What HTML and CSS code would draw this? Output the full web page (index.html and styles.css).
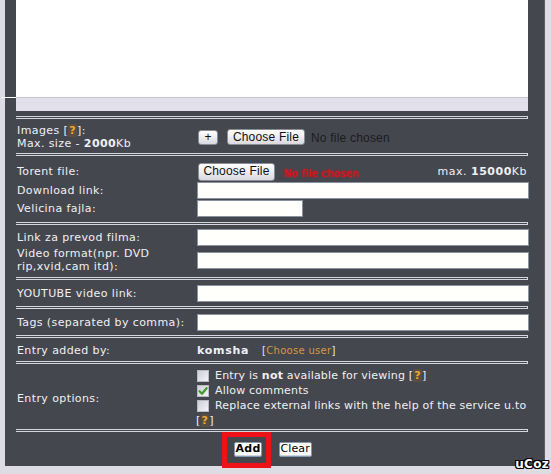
FILE: index.html
```html
<!DOCTYPE html>
<html>
<head>
<meta charset="utf-8">
<link rel="stylesheet" href="styles.css">
</head>
<body>
<div class="page">
  <div class="panel">
    <div class="editor">
      <div class="editor-area"></div>
      <div class="editor-bar"></div>
    </div>
    <div class="sep"></div>

    <div class="section s-images">
      <div class="row">
        <div class="label">Images [<span class="q">?</span>]:<br>Max. size - <b>2000</b>Kb</div>
        <div class="field">
          <button class="btn plus">+</button>
          <button class="btn file">Choose File</button>
          <span class="nofile">No file chosen</span>
        </div>
      </div>
    </div>
    <div class="sep"></div>

    <div class="section s-torrent">
      <div class="row r19">
        <div class="label">Torent file:</div>
        <div class="field">
          <button class="btn file file2">Choose File</button>
          <span class="nofile-red">No file chosen</span>
          <span class="max">max. <b>15000</b>Kb</span>
        </div>
      </div>
      <div class="row r18">
        <div class="label">Download link:</div>
        <div class="field"><span class="inp"></span></div>
      </div>
      <div class="row r18">
        <div class="label">Velicina fajla:</div>
        <div class="field"><span class="inp short"></span></div>
      </div>
    </div>
    <div class="sep"></div>

    <div class="section s-links">
      <div class="row r19">
        <div class="label">Link za prevod filma:</div>
        <div class="field"><span class="inp"></span></div>
      </div>
      <div class="row r26">
        <div class="label">Video format(npr. DVD<br>rip,xvid,cam itd):</div>
        <div class="field"><span class="inp"></span></div>
      </div>
    </div>
    <div class="sep"></div>

    <div class="section s-single">
      <div class="row r19">
        <div class="label">YOUTUBE video link:</div>
        <div class="field"><span class="inp"></span></div>
      </div>
    </div>
    <div class="sep"></div>

    <div class="section s-single">
      <div class="row r19">
        <div class="label">Tags (separated by comma):</div>
        <div class="field"><span class="inp"></span></div>
      </div>
    </div>
    <div class="sep"></div>

    <div class="section s-user">
      <div class="row r16">
        <div class="label">Entry added by:</div>
        <div class="field">
          <b class="user">komsha</b>
          <span class="choose">[<span class="choose-link">Choose user</span>]</span>
        </div>
      </div>
    </div>
    <div class="sep"></div>

    <div class="section s-options">
      <div class="row">
        <div class="label">Entry options:</div>
        <div class="field opts">
          <div class="opt"><span class="cb"></span><span class="opt-text">Entry is <b>not</b> available for viewing [<span class="q">?</span>]</span></div>
          <div class="opt"><span class="cb"><svg viewBox="0 0 12 12" width="12" height="12"><path d="M2.5 6.2 L5 8.8 L9.6 3.2" fill="none" stroke="#3f9a2a" stroke-width="2.2" stroke-linecap="round" stroke-linejoin="round"/></svg></span><span class="opt-text">Allow comments</span></div>
          <div class="opt"><span class="cb"></span><span class="opt-text">Replace external links with the help of the service u.to</span></div>
          <div class="opt opt-q"><span>[<span class="q">?</span>]</span></div>
        </div>
      </div>
    </div>
    <div class="sep"></div>

    <div class="section s-buttons">
      <span class="hl"><button class="sbtn add">Add</button></span>
      <button class="sbtn clear">Clear</button>
    </div>
  </div>
  <div class="ucoz">uCoz</div>
</div>
</body>
</html>
```
FILE: styles.css
```css
html, body {
  margin: 0;
  padding: 0;
}
body {
  background: #dddce2;
  font-family: "DejaVu Sans", Verdana, sans-serif;
}
.page {
  position: relative;
  width: 551px;
  height: 474px;
  overflow: hidden;
  background: #dddce2;
}
.panel {
  position: relative;
  margin-left: 5px;
  width: 540px;
  height: 466px;
  box-sizing: border-box;
  padding: 0 16px 0 11px;
  background: #45474f;
  border-right: 1px solid #5b5d66;
  color: #f0f0f2;
  font-size: 11px;
  letter-spacing: 0.3px;
}
.editor {
  position: relative;
  margin-bottom: 5px;
}
.editor::before {
  content: "";
  position: absolute;
  left: -14px;
  top: 97px;
  width: 14px;
  height: 1px;
  background: #ffffff;
}
.editor-area {
  height: 97px;
  background: #ffffff;
}
.editor-bar {
  height: 13px;
  border-top: 1px solid #c6c6ce;
  background: #e2e1eb;
}
.sep {
  height: 1px;
  border-top: 1px solid #d6d6de;
  border-bottom: 1px solid #d6d6de;
  border-right: 1px solid #d6d6de;
}
.section {
  box-sizing: border-box;
}
.s-images { padding: 5px 0 3px; }
.s-torrent { padding: 6px 0 5px; }
.s-links { padding: 3px 0 4px; }
.s-single { padding: 4px 0 3px; }
.s-user { padding: 4px 0 3px; }
.s-options { padding: 4px 0 1px; }
.row {
  display: grid;
  grid-template-columns: 181px 332px;
  align-items: center;
  line-height: 13px;
}
.r16 { height: 16px; }
.r18 { height: 18px; }
.r19 { height: 19px; }
.r26 { height: 26px; }
.label {
  padding-left: 1px;
  white-space: nowrap;
  letter-spacing: 0.4px;
}
.field {
  display: flex;
  align-items: center;
  min-width: 0;
}
.q {
  color: #f0a72e;
  font-weight: bold;
  background: #5a4e40;
  padding: 0 1px;
}
.btn {
  box-sizing: border-box;
  font-family: "Liberation Sans", Arial, sans-serif;
  font-size: 12px;
  letter-spacing: 0.2px;
  color: #111;
  background: linear-gradient(#ffffff, #e9e9ec 60%, #d9d9de);
  border: 1px solid #8b8d96;
  border-radius: 3px;
  padding: 0;
  margin: 0;
  line-height: 13px;
}
.plus {
  width: 20px;
  height: 15px;
  margin-left: 1px;
}
.file {
  width: 78px;
  height: 16px;
  margin-left: 9px;
}
.file2 {
  width: 77px;
  height: 18px;
  margin-left: 1px;
}
.nofile {
  margin-left: 6px;
  margin-top: 3px;
  font-family: "Liberation Sans", Arial, sans-serif;
  font-size: 12px;
  letter-spacing: 0.2px;
  color: #1c1c20;
}
.nofile-red {
  margin-left: 9px;
  margin-top: 4px;
  font-size: 10px;
  color: #d4161c;
  letter-spacing: 0.3px;
  text-shadow: 0 0 2px #d4161c, 0 0 1px #d4161c;
}
.max {
  margin-left: auto;
  margin-right: 2px;
  letter-spacing: 0.5px;
}
.inp {
  display: block;
  box-sizing: border-box;
  width: 332px;
  height: 17px;
  background: #fffffb;
  border: 1px solid #8a939d;
}
.inp.short {
  width: 106px;
}
.user {
  letter-spacing: 0.7px;
}
.choose {
  margin-left: 13px;
  font-size: 10px;
  letter-spacing: 0.3px;
  color: #e6e6e8;
}
.choose-link {
  color: #d9963f;
}
.opts {
  flex-direction: column;
  align-items: stretch;
}
.opt {
  display: flex;
  align-items: center;
  height: 15px;
  white-space: nowrap;
}
.opt-text {
  letter-spacing: 0.2px;
}
.cb {
  flex: none;
  box-sizing: border-box;
  width: 12px;
  height: 12px;
  margin-right: 6px;
  background: linear-gradient(135deg, #cfd0d8, #f2f2f6);
  border: 1px solid #b9bac4;
  display: flex;
}
.cb svg {
  margin: -1px;
}
.opt-q {
  margin-left: -1px;
}
.s-buttons {
  height: 34px;
  display: flex;
  align-items: center;
  justify-content: center;
  gap: 17px;
  padding-left: 1px;
}
.hl {
  position: relative;
  display: inline-flex;
}
.hl::after {
  content: "";
  position: absolute;
  left: -12px;
  right: -9px;
  top: -10px;
  bottom: -11px;
  border: 5px solid #ee1218;
}
.sbtn {
  box-sizing: border-box;
  height: 15px;
  padding: 0 1px;
  margin: 0;
  font-family: "DejaVu Sans", Verdana, sans-serif;
  font-size: 11px;
  line-height: 12px;
  color: #000;
  background: #ffffff;
  border: 1px solid #7f99b0;
  border-radius: 2px;
  box-shadow: inset 0 -1px 0 #c9d6e2;
}
.add {
  width: 28px;
  font-weight: bold;
  letter-spacing: 0.3px;
}
.clear {
  width: 33px;
  letter-spacing: 0.1px;
}
.ucoz {
  position: absolute;
  right: 2px;
  bottom: 4px;
  font-family: "DejaVu Sans", Verdana, sans-serif;
  font-weight: bold;
  font-size: 12px;
  line-height: 12px;
  letter-spacing: 0.3px;
  color: #ffffff;
  text-shadow: 1px 0 0 #000, -1px 0 0 #000, 0 1px 0 #000, 0 -1px 0 #000, 1px 1px 0 #000, -1px -1px 0 #000, 1px -1px 0 #000, -1px 1px 0 #000;
}
```
